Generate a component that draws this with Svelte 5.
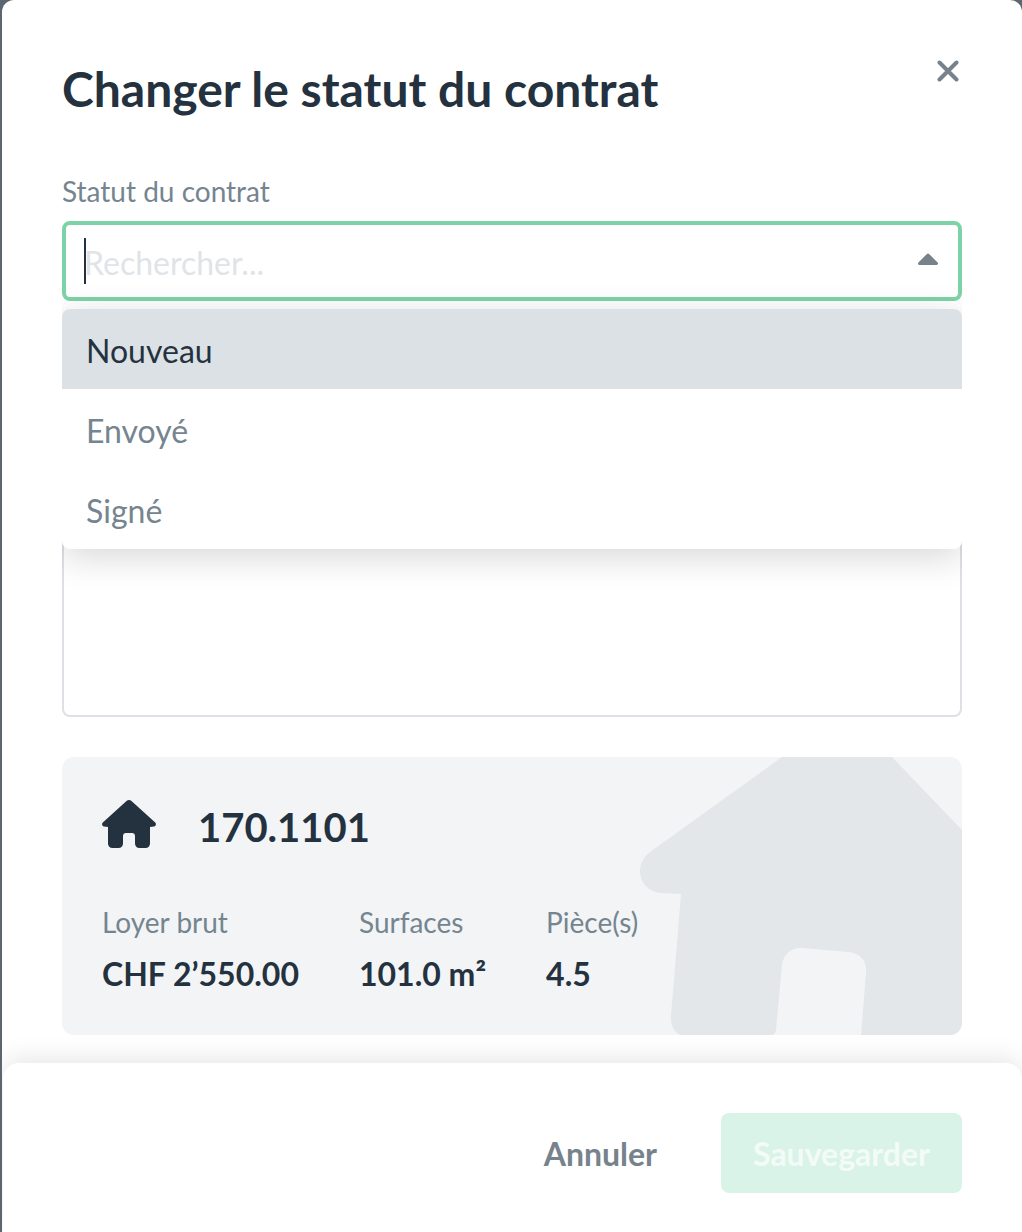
<script lang="ts">
  const options = ['Nouveau', 'Envoyé', 'Signé'];
  const stats = [
    { label: 'Loyer brut', value: 'CHF 2’550.00' },
    { label: 'Surfaces', value: '101.0 m²' },
    { label: 'Pièce(s)', value: '4.5' }
  ];
</script>

<div class="modal">
  <div class="content">
    <header>
      <h1>Changer le statut du contrat</h1>
      <button class="close" aria-label="Fermer">
        <svg viewBox="0 0 22 22" width="22" height="22">
          <path d="M2.5 2.5 19.5 19.5M19.5 2.5 2.5 19.5" fill="none" stroke="#76838c" stroke-width="4" stroke-linecap="round" />
        </svg>
      </button>
    </header>

    <div class="field-label">Statut du contrat</div>
    <div class="select">
      <div class="control">
        <span class="caret"></span>
        <input placeholder="Rechercher..." />
        <svg class="arrow" viewBox="0 0 20 12" width="20" height="12">
          <path d="M10 2 18.5 10.5H1.5Z" fill="#76838c" stroke="#76838c" stroke-width="3" stroke-linejoin="round" />
        </svg>
      </div>
      <ul class="menu">
        {#each options as option, i}
          <li class:active={i === 0}>{option}</li>
        {/each}
      </ul>
    </div>

    <div class="comment"></div>

    <section class="card">
      <svg class="house-bg" viewBox="640 757 322 278" width="322" height="278" aria-hidden="true">
        <path
          d="M650 852 782 757H892L962 830V1035H861L866 972C867 960 859 953 848 952L802 948C791 947 783 955 782 965L776 1030Q775 1035 772 1035H680C673 1031 670 1023 671 1015L681 894 660 893C640 891 632 866 650 852Z"
          fill="#e4e7ea"
        />
      </svg>
      <div class="card-title">
        <svg viewBox="0 0 54 48" width="54" height="48">
          <path
            d="M27 0C28 0 28.8 0.4 29.5 1L53.2 22.6C54.6 24 53.8 26 52 26.4L48 27V43.5C48 46.2 46.2 48 43.5 48H37.5C34.8 48 33 46.2 33 43.5V36C33 34.2 31.8 33 30 33H24C22.2 33 21 34.2 21 36V43.5C21 46.2 19.2 48 16.5 48H10.5C7.8 48 6 46.2 6 43.5V27L2 26.4C0.2 26-0.6 24 0.8 22.6L24.5 1C25.2 0.4 26 0 27 0Z"
            fill="#24323f"
          />
        </svg>
        <span>170.1101</span>
      </div>
      <div class="stats">
        {#each stats as stat}
          <div class="stat">
            <div class="stat-label">{stat.label}</div>
            <div class="stat-value">{stat.value}</div>
          </div>
        {/each}
      </div>
    </section>
  </div>

  <footer>
    <button class="cancel">Annuler</button>
    <button class="save" disabled>Sauvegarder</button>
  </footer>
</div>

<style>
  :global(body) { background: #5b6670; overflow: hidden; }
  .modal { margin-left: 2px; height: 1232px; background: #fff; border-radius: 12px 12px 0 0; display: flex; flex-direction: column; font-family: Lato, "Open Sans", sans-serif; overflow: hidden; }
  .content { flex: 1; padding: 0 60px; min-height: 0; }
  header { display: flex; justify-content: space-between; align-items: flex-start; padding-top: 59px; height: 161px; box-sizing: border-box; }
  h1 { margin: 0; font-size: 48px; line-height: 60px; font-weight: 700; color: #24323f; }
  .close { background: none; border: 0; padding: 0; margin: 1px 3px 0 0; height: 22px; cursor: pointer; }
  .close svg { display: block; }
  .field-label { font-size: 28px; line-height: 40px; color: #75858f; margin-top: 10px; height: 50px; }
  .select { position: relative; }
  .control { height: 80px; box-sizing: border-box; border: 4px solid #7dd3a8; border-radius: 8px; display: flex; align-items: center; padding: 0 20px 0 18px; background: #fff; }
  .caret { width: 2px; height: 46px; background: #24323f; flex-shrink: 0; margin-right: -2px; }
  input { flex: 1; min-width: 0; border: 0; outline: 0; padding: 3px 0 0; background: transparent; font: inherit; font-size: 32px; color: #24323f; }
  input::placeholder { color: #dfe4e8; opacity: 1; }
  .arrow { flex-shrink: 0; margin-bottom: 4px; }
  .menu { position: absolute; z-index: 2; top: 88px; left: 0; right: 0; margin: 0; padding: 0; list-style: none; background: #fff; border-radius: 8px; box-shadow: 0 8px 36px rgba(0, 0, 0, 0.16); clip-path: inset(-40px 0 -60px 0); }
  .menu li { height: 80px; line-height: 84px; padding: 0 24px; font-size: 32px; color: #75858f; }
  .menu li.active { background: #dce1e5; color: #24323f; border-radius: 8px 8px 0 0; }
  .comment { margin-top: 160px; height: 256px; box-sizing: border-box; border: 2px solid #dde1e5; border-radius: 8px; }
  .card { position: relative; margin-top: 40px; height: 278px; box-sizing: border-box; background: #f3f4f6; border-radius: 12px; padding: 43px 40px 0; overflow: hidden; }
  .house-bg { position: absolute; right: 0; top: 0; }
  .card-title { position: relative; display: flex; align-items: center; gap: 43px; height: 48px; font-size: 40px; font-weight: 700; color: #24323f; }
  .card-title svg { display: block; flex-shrink: 0; }
  .card-title span { padding-top: 6px; margin-left: -1px; }
  .stats { position: relative; display: flex; gap: 60px; margin-top: 54px; }
  .stat-label { font-size: 28px; line-height: 40px; color: #75858f; }
  .stat-value { margin-top: 12px; font-size: 32px; line-height: 40px; font-weight: 700; color: #24323f; }
  footer { position: relative; height: 169px; box-sizing: border-box; background: #fff; border-radius: 16px 16px 0 0; box-shadow: 0 -6px 24px rgba(0, 0, 0, 0.09); display: flex; justify-content: flex-end; align-items: flex-start; gap: 64px; padding: 50px 60px 0 0; margin-left: 1px; }
  footer button { border: 0; background: none; font: inherit; font-size: 32px; font-weight: 700; height: 80px; border-radius: 8px; padding: 0; }
  .cancel { color: #76838c; }
  .save { width: 241px; background: #d9f3e8; color: #f3fbf8; }
</style>
